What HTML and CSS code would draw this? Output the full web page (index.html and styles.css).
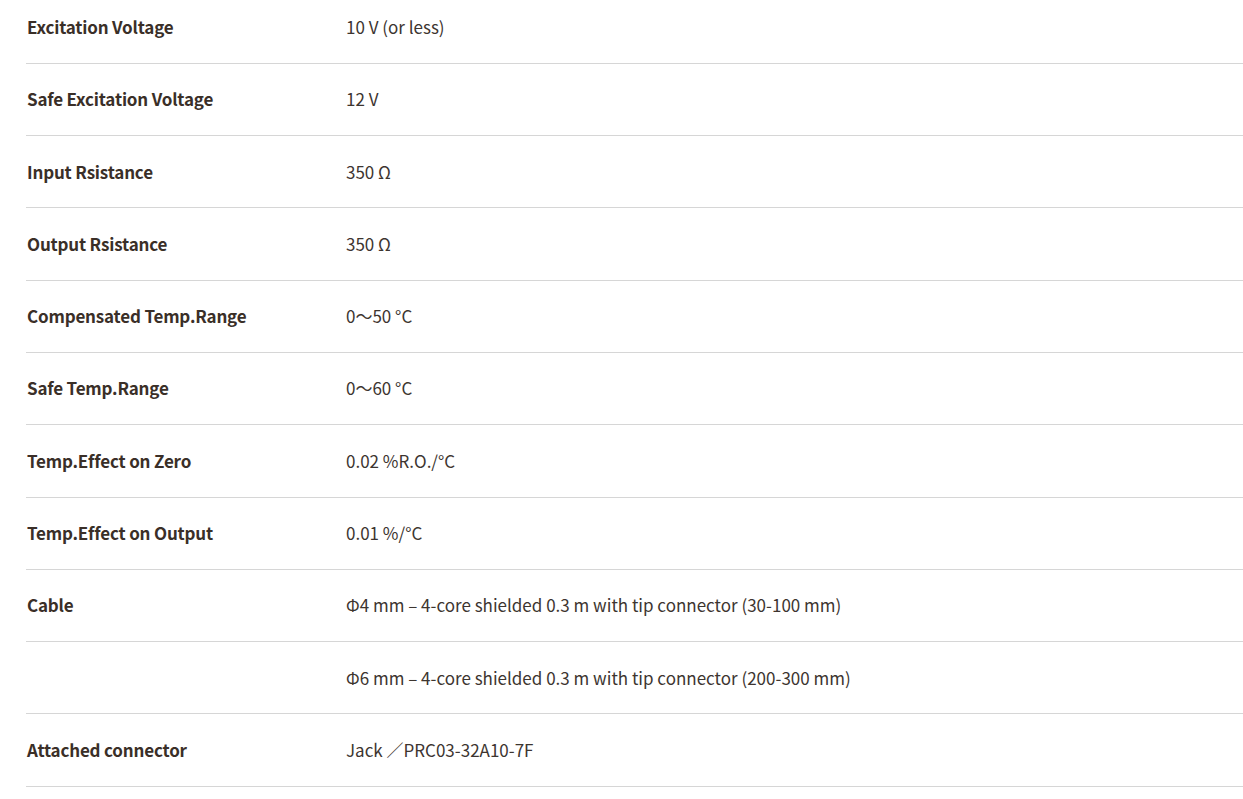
FILE: index.html
```html
<!DOCTYPE html>
<html lang="ja">
<head>
<meta charset="utf-8">
<link rel="stylesheet" href="styles.css">
</head>
<body>
<div class="spec">
  <div class="row"><div class="label">Excitation Voltage</div><div class="value">10 V (or less)</div></div>
  <div class="row"><div class="label">Safe Excitation Voltage</div><div class="value">12 V</div></div>
  <div class="row"><div class="label">Input Rsistance</div><div class="value">350 Ω</div></div>
  <div class="row"><div class="label">Output Rsistance</div><div class="value">350 Ω</div></div>
  <div class="row"><div class="label">Compensated Temp.Range</div><div class="value">0～50 °C</div></div>
  <div class="row"><div class="label">Safe Temp.Range</div><div class="value">0～60 °C</div></div>
  <div class="row"><div class="label">Temp.Effect on Zero</div><div class="value">0.02 %R.O./°C</div></div>
  <div class="row"><div class="label">Temp.Effect on Output</div><div class="value">0.01 %/°C</div></div>
  <div class="row"><div class="label">Cable</div><div class="value">Φ4 mm – 4-core shielded 0.3 m with tip connector (30-100 mm)</div></div>
  <div class="row"><div class="label"></div><div class="value">Φ6 mm – 4-core shielded 0.3 m with tip connector (200-300 mm)</div></div>
  <div class="row"><div class="label">Attached connector</div><div class="value">Jack ／PRC03-32A10-7F</div></div>
</div>
</body>
</html>
```
FILE: styles.css
```css
html, body {
  margin: 0;
  padding: 0;
  background: #ffffff;
}
body {
  font-family: "Noto Sans CJK JP", "Noto Sans", sans-serif;
  font-size: 17px;
  color: #3b3029;
  overflow: hidden;
}
.spec {
  margin: -8.5px 0 0 26px;
}
.row {
  display: flex;
  padding: 23.5px 0;
  line-height: 24.3px;
  border-bottom: 1px solid #d6d6d6;
}
.label {
  width: 320px;
  flex: none;
  padding-left: 1px;
  box-sizing: border-box;
  font-weight: 700;
  letter-spacing: -0.18px;
  color: #3a2f28;
}
.value {
  flex: 1;
  color: #3d3530;
}
```
